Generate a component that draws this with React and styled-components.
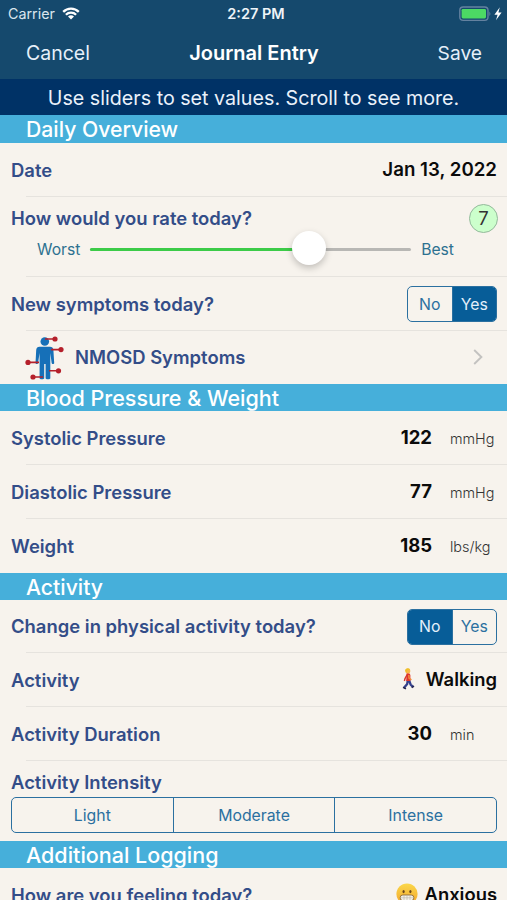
import React, { useState } from "react";
import styled, { createGlobalStyle } from "styled-components";

function WifiIcon() {
  return (
    <svg width="18" height="13" viewBox="0 0 18 13" fill="none" stroke="#fff" strokeWidth="2.3">
      <path d="M1.2 4.9 A11 11 0 0 1 16.8 4.9" />
      <path d="M3.9 7.8 A7.2 7.2 0 0 1 14.1 7.8" />
      <path d="M9 12.6 L6 9.6 A4.3 4.3 0 0 1 12 9.6 Z" fill="#fff" stroke="none" />
    </svg>
  );
}

function BatteryIcon() {
  return (
    <svg width="44" height="16" viewBox="0 0 44 16">
      <rect x="0.8" y="1" width="28.2" height="13.4" rx="3.4" fill="none" stroke="#6482a0" strokeWidth="1.4" />
      <rect x="2.6" y="2.9" width="24.4" height="9.6" rx="1.4" fill="#4cd964" />
      <path d="M30.4 5.4 Q32.4 7.7 30.4 10 Z" fill="#6482a0" />
      <path d="M40.8 1.2 L35.4 8.8 L38.6 8.8 L37 14.2 L42.6 6.6 L39.4 6.6 Z" fill="#fff" />
    </svg>
  );
}

function BodyIcon() {
  return (
    <svg width="40" height="46" viewBox="0 0 40 46">
      <g fill="#1670b8">
        <circle cx="19.8" cy="6.5" r="4.3" />
        <path d="M14.5 11.8 H25 Q28 11.8 28.4 15 L29.2 28.2 Q28 30 26.7 28.2 L25.3 18 V43.5 Q23 45.2 20.6 43.5 V29 H19.2 V43.5 Q16.8 45.2 14.6 43.5 V18 L13 28.2 Q11.8 30 10.5 28.2 L11.2 15 Q11.6 11.8 14.5 11.8 Z" />
      </g>
      <g stroke="#b5202b" strokeWidth="1.6">
        <path d="M20 4 H30 M26 14.6 H36 M3 27.4 H14 M24 35.8 H34 M8 42 H18" />
      </g>
      <g fill="#b5202b">
        <circle cx="30" cy="4" r="2.6" />
        <circle cx="36" cy="14.6" r="2.6" />
        <circle cx="3" cy="27.4" r="2.6" />
        <circle cx="33.5" cy="35.8" r="2.6" />
        <circle cx="8" cy="42" r="2.6" />
      </g>
    </svg>
  );
}

function WalkerIcon() {
  return (
    <svg width="14" height="22" viewBox="0 0 14 22">
      <path d="M5.8 12 L5.2 16 L1.8 20 M7 12 L8.6 16.5 L11 18.8" fill="none" stroke="#34408c" strokeWidth="2.3" />
      <path d="M1 19.4 L4 20.8 M9.7 19.7 L12 18.2" stroke="#25264f" strokeWidth="1.6" />
      <path d="M4.6 5.2 Q7.8 4.6 8.4 7 L8.4 13 H4.2 Z" fill="#e0342c" />
      <path d="M5.2 6.5 L3 10.6 L2.4 13" fill="none" stroke="#d8362d" strokeWidth="1.4" />
      <path d="M6.8 7 L7 10 L9.4 11.8" fill="none" stroke="#f08a3a" strokeWidth="1.5" />
      <circle cx="5.8" cy="3" r="2.5" fill="#f7b84a" />
      <path d="M3.2 3 Q3 0.3 6 0.3 Q8 0.3 8.2 1.8 L5.4 2.2 L4.6 4.4 Z" fill="#efc02a" />
    </svg>
  );
}

function GrimaceIcon() {
  return (
    <svg width="22" height="22" viewBox="0 0 22 22">
      <defs>
        <linearGradient id="face" x1="0" y1="0" x2="0" y2="1">
          <stop offset="0" stopColor="#fbd84a" />
          <stop offset="1" stopColor="#f2a52d" />
        </linearGradient>
      </defs>
      <circle cx="11" cy="11" r="10.6" fill="url(#face)" />
      <ellipse cx="7.6" cy="8.6" rx="1.1" ry="1.6" fill="#6a451c" />
      <ellipse cx="14.4" cy="8.6" rx="1.1" ry="1.6" fill="#6a451c" />
      <rect x="4.2" y="12" width="13.6" height="5.6" rx="2.6" fill="#f4f1ea" stroke="#8d6a35" strokeWidth="0.9" />
      <path d="M4.6 14.8 H17.4 M8 12.4 V17.2 M11 12.4 V17.2 M14 12.4 V17.2" stroke="#b9b3a5" strokeWidth="0.6" />
    </svg>
  );
}

// Segmented control
function Segments({ options, value, onChange, wide }) {
  return (
    <SegmentBox $wide={wide}>
      {options.map((item) => (
        <Segment key={item} $on={item === value} onClick={() => onChange(item)}>
          {item}
        </Segment>
      ))}
    </SegmentBox>
  );
}

// Number with its unit
function Reading({ label, value, unit, height, last }) {
  return (
    <Row $height={height} $last={last}>
      <Label>{label}</Label>
      <Amount>{value}</Amount>
      <Unit>{unit}</Unit>
    </Row>
  );
}

function App() {
  const [symptoms, setSymptoms] = useState("Yes");
  const [changed, setChanged] = useState("No");
  const [intensity, setIntensity] = useState(null);
  const rating = 7;

  return (
    <Screen>
      <GlobalStyle />
      <TopBar>
        <StatusBar>
          <Carrier>Carrier <WifiIcon /></Carrier>
          <Clock>2:27 PM</Clock>
          <Battery><BatteryIcon /></Battery>
        </StatusBar>
        <NavBar>
          <NavButton>Cancel</NavButton>
          <Title>Journal Entry</Title>
          <NavButton $end>Save</NavButton>
        </NavBar>
      </TopBar>
      <Hint>Use sliders to set values. Scroll to see more.</Hint>

      <SectionTitle $height={28} $size={21.2}>Daily Overview</SectionTitle>
      <Row $height={54}>
        <Label>Date</Label>
        <Value $size={18.7}>Jan 13, 2022</Value>
      </Row>
      <RateRow>
        <RateHead>
          <Label>How would you rate today?</Label>
          <Score>{rating}</Score>
        </RateHead>
        <SliderLine>
          <SliderText>Worst</SliderText>
          <Track>
            <Fill style={{ width: `${(rating - 0.2) * 10}%` }} />
            <Thumb style={{ left: `${(rating - 0.2) * 10}%` }} />
          </Track>
          <SliderText>Best</SliderText>
        </SliderLine>
      </RateRow>
      <Row $height={54}>
        <Label>New symptoms today?</Label>
        <Segments options={["No", "Yes"]} value={symptoms} onChange={setSymptoms} />
      </Row>
      <LinkRow $height={53} $last>
        <BodyIcon />
        <Label>NMOSD Symptoms</Label>
        <Chevron width="10" height="16" viewBox="0 0 10 16">
          <path d="M1.2 1 L8.4 8 L1.2 15" fill="none" stroke="#c3c2c0" strokeWidth="1.9" />
        </Chevron>
      </LinkRow>

      <SectionTitle>Blood Pressure &amp; Weight</SectionTitle>
      <Reading label="Systolic Pressure" value="122" unit="mmHg" height={54} />
      <Reading label="Diastolic Pressure" value="77" unit="mmHg" height={54} />
      <Reading label="Weight" value="185" unit="lbs/kg" height={54} last />

      <SectionTitle $size={21.2}>Activity</SectionTitle>
      <Row $height={53}>
        <Label>Change in physical activity today?</Label>
        <Segments options={["No", "Yes"]} value={changed} onChange={setChanged} />
      </Row>
      <Row $height={54}>
        <Label>Activity</Label>
        <Value><WalkerIcon />Walking</Value>
      </Row>
      <Reading label="Activity Duration" value="30" unit="min" height={54} />
      <IntensityRow>
        <Label>Activity Intensity</Label>
        <Segments
          wide
          options={["Light", "Moderate", "Intense"]}
          value={intensity}
          onChange={setIntensity}
        />
      </IntensityRow>

      <SectionTitle>Additional Logging</SectionTitle>
      <Row $height={54}>
        <Label>How are you feeling today?</Label>
        <Value $gap={7}><GrimaceIcon />Anxious</Value>
      </Row>
    </Screen>
  );
}

export default App;

const GlobalStyle = createGlobalStyle`
  * {
    box-sizing:border-box;
  }
  body {
    margin:0;
    overflow:hidden;
    font-family:Inter, "Liberation Sans", sans-serif;
  }
  button {
    font-family:inherit;
    border:0;
    padding:0;
    background:none;
    cursor:pointer;
  }
  svg {
    display:block;
    flex:none;
  }
`
const Screen = styled.main`
  height:900px;
  overflow:hidden;
  display:flex;
  flex-direction:column;
  background-color:#f7f3ed;
  white-space:nowrap;
`
const TopBar = styled.header`
  flex:none;
  height:79px;
  background-color:#15496d;
  color:#fff;
`
const StatusBar = styled.div`
  display:grid;
  grid-template-columns:1fr auto 1fr;
  align-items:center;
  height:27px;
  padding:0 4px 0 8px;
`
const Carrier = styled.span`
  display:flex;
  align-items:center;
  gap:7px;
  font-size:14.3px;
  color:#d9e5ee;
`
const Clock = styled.span`
  padding-left:1px;
  font-size:14.5px;
  font-weight:600;
  color:#eef4f8;
`
const Battery = styled.span`
  justify-self:end;
`
const NavBar = styled.nav`
  display:grid;
  grid-template-columns:1fr auto 1fr;
  align-items:center;
  height:51px;
  padding:0 25px 0 26px;
`
const NavButton = styled.button`
  justify-self:${(props) => (props.$end ? "end" : "start")};
  font-size:${(props) => (props.$end ? "19.2px" : "19.5px")};
  color:#e6f0fa;
`
const Title = styled.h1`
  margin:0;
  font-size:20px;
  font-weight:600;
`
const Hint = styled.p`
  flex:none;
  height:36px;
  margin:0;
  padding-top:1px;
  line-height:37px;
  text-align:center;
  font-size:19.7px;
  color:#eaf1fa;
  background-color:#003266;
`
const SectionTitle = styled.h2`
  flex:none;
  height:${(props) => props.$height || 27}px;
  margin:0;
  padding-left:26px;
  line-height:28px;
  font-size:${(props) => props.$size || 21.5}px;
  font-weight:500;
  color:#fff;
  background-color:#46afda;
`
const Row = styled.div`
  flex:none;
  display:flex;
  align-items:center;
  height:${(props) => props.$height}px;
  padding:0 10px 0 11px;
  background:${(props) =>
    props.$last ? "none" : "linear-gradient(#e6e3de, #e6e3de) 26px 100% / 100% 1px no-repeat"};
`
const LinkRow = styled(Row)`
  padding:0 24px 0 25px;
  gap:10px;
`
const Label = styled.span`
  padding-bottom:1px;
  font-size:18.45px;
  font-weight:600;
  color:#334d88;
  margin-right:auto;
`
const Value = styled.span`
  display:flex;
  align-items:center;
  gap:${(props) => props.$gap || 10}px;
  padding-bottom:2px;
  font-size:${(props) => props.$size || 18.4}px;
  font-weight:600;
  color:#0b0b0b;
`
const Amount = styled.span`
  padding-bottom:2px;
  font-size:18.5px;
  font-weight:700;
  color:#0b0b0b;
`
const Unit = styled.span`
  width:47px;
  margin-left:18px;
  font-size:14.4px;
  font-weight:300;
  color:#333;
`
const RateRow = styled(Row)`
  height:80px;
  flex-direction:column;
  align-items:stretch;
`
const RateHead = styled.div`
  display:flex;
  align-items:center;
  height:42px;
  margin-right:-1px;
`
const Score = styled.span`
  width:29px;
  height:29px;
  border:1px solid #94b99b;
  border-radius:50%;
  background-color:#ccffcc;
  line-height:27px;
  text-align:center;
  font-size:18.5px;
  color:#333;
`
const SliderLine = styled.div`
  display:flex;
  align-items:center;
  height:20px;
  gap:10px;
  padding:0 43px 0 26px;
`
const SliderText = styled.span`
  font-size:15.7px;
  color:#2d7190;
`
const Track = styled.div`
  position:relative;
  flex:1;
  height:3px;
  border-radius:2px;
  background-color:#b8b7b4;
`
const Fill = styled.div`
  height:3px;
  border-radius:2px;
  background-color:#3ccb48;
`
const Thumb = styled.div`
  position:absolute;
  top:-17px;
  width:34px;
  height:34px;
  margin-left:-17px;
  border-radius:50%;
  background-color:#fff;
  box-shadow:0 3px 7px rgba(0, 0, 0, 0.22);
`
const SegmentBox = styled.div`
  display:flex;
  width:${(props) => (props.$wide ? "auto" : "90px")};
  height:36px;
  border:1px solid #2b70a0;
  border-radius:5px;
  overflow:hidden;
`
const Segment = styled.button`
  flex:1;
  font-size:15.8px;
  color:${(props) => (props.$on ? "#e4effa" : "#2b70a0")};
  background-color:${(props) => (props.$on ? "#075d98" : "transparent")};
  & + & {
    border-left:1px solid #2b70a0;
  }
`
const Chevron = styled.svg`
  margin-bottom:1px;
`
const IntensityRow = styled.div`
  flex:none;
  display:flex;
  flex-direction:column;
  gap:3px;
  height:80px;
  padding:10px 10px 0 11px;
`
